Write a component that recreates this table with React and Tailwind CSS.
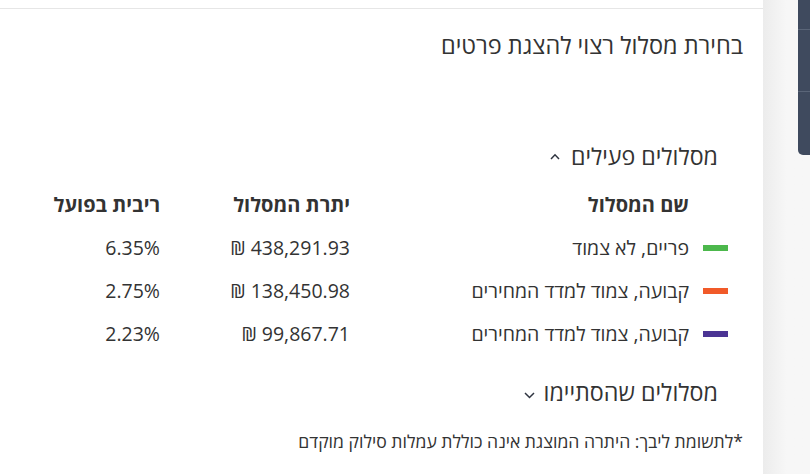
import React from "react";

const rows = [
  { name: "פריים, לא צמוד", color: "bg-[#4cb84c]", bal: "438,291.93", rate: "6.35%" },
  { name: "קבועה, צמוד למדד המחירים", color: "bg-[#f15a29]", bal: "138,450.98", rate: "2.75%" },
  { name: "קבועה, צמוד למדד המחירים", color: "bg-[#4b3494]", bal: "99,867.71", rate: "2.23%" },
];

function Chevron({ up }) {
  return up ? (
    <svg width="10" height="7" viewBox="0 0 10 7" className="block">
      <path d="M1 6 L5 1.8 L9 6" fill="none" stroke="#2f3440" strokeWidth="1.5" />
    </svg>
  ) : (
    <svg width="11" height="8" viewBox="0 0 11 8" className="block mt-[5px]">
      <path d="M1 2 L5.5 6.5 L10 2" fill="none" stroke="#2f3440" strokeWidth="1.5" />
    </svg>
  );
}

export default function App() {
  return (
    <div className="flex w-[810px] h-[474px] overflow-hidden bg-[#f7f7f7]" style={{ fontFamily: '"Open Sans", sans-serif' }}>
      <div dir="rtl" className="w-[763px] h-full bg-white text-[#333] flex flex-col">
        <div className="h-[9px] border-b border-[#e6e6e6]" />
        <div className="pr-[20px] pt-[20px] text-[23.5px] leading-[32px]">בחירת מסלול רצוי להצגת פרטים</div>
        <div className="pr-[45px] mt-[79px] flex items-center gap-[11px] text-[23.2px] leading-[32px]">
          <span>מסלולים פעילים</span>
          <Chevron up />
        </div>
        <div className="mr-[35px] mt-[20px] grid grid-cols-[378px_190px_1fr] text-[19.5px] leading-[26px]">
          <div className="pr-[39px] font-bold h-[34px] text-[20px]">שם המסלול</div>
          <div className="font-bold text-[20px]">יתרת המסלול</div>
          <div className="font-bold text-[20px]">ריבית בפועל</div>
          {rows.map((r, i) => (
            <React.Fragment key={i}>
              <div className="flex items-center gap-[14px] h-[43px]">
                <span className={`w-[25px] h-[6px] ${r.color}`} />
                <span>{r.name}</span>
              </div>
              <div className="flex items-center" dir="ltr">
                <span className="ml-auto">₪ {r.bal}</span>
              </div>
              <div className="flex items-center" dir="ltr">
                <span className="ml-auto">{r.rate}</span>
              </div>
            </React.Fragment>
          ))}
        </div>
        <div className="pr-[45px] mt-[21px] flex items-center gap-[9px] text-[23.3px] leading-[32px]">
          <span>מסלולים שהסתיימו</span>
          <Chevron />
        </div>
        <div className="pr-[20px] mt-[21px] text-[17.6px] leading-[24px]">*לתשומת ליבך: היתרה המוצגת אינה כוללת עמלות סילוק מוקדם</div>
      </div>
      <div className="flex-1 relative bg-gradient-to-r from-[#ececec] via-[#f7f7f7] to-[#f7f7f7]">
        <div className="absolute right-0 top-0 w-[12px] h-[155px] bg-[#3f4a5e] rounded-bl-[5px] flex flex-col">
          <div className="h-[30px] border-b border-[#5a6578]" />
          <div className="h-[62px] border-b border-[#5a6578]" />
        </div>
      </div>
    </div>
  );
}
